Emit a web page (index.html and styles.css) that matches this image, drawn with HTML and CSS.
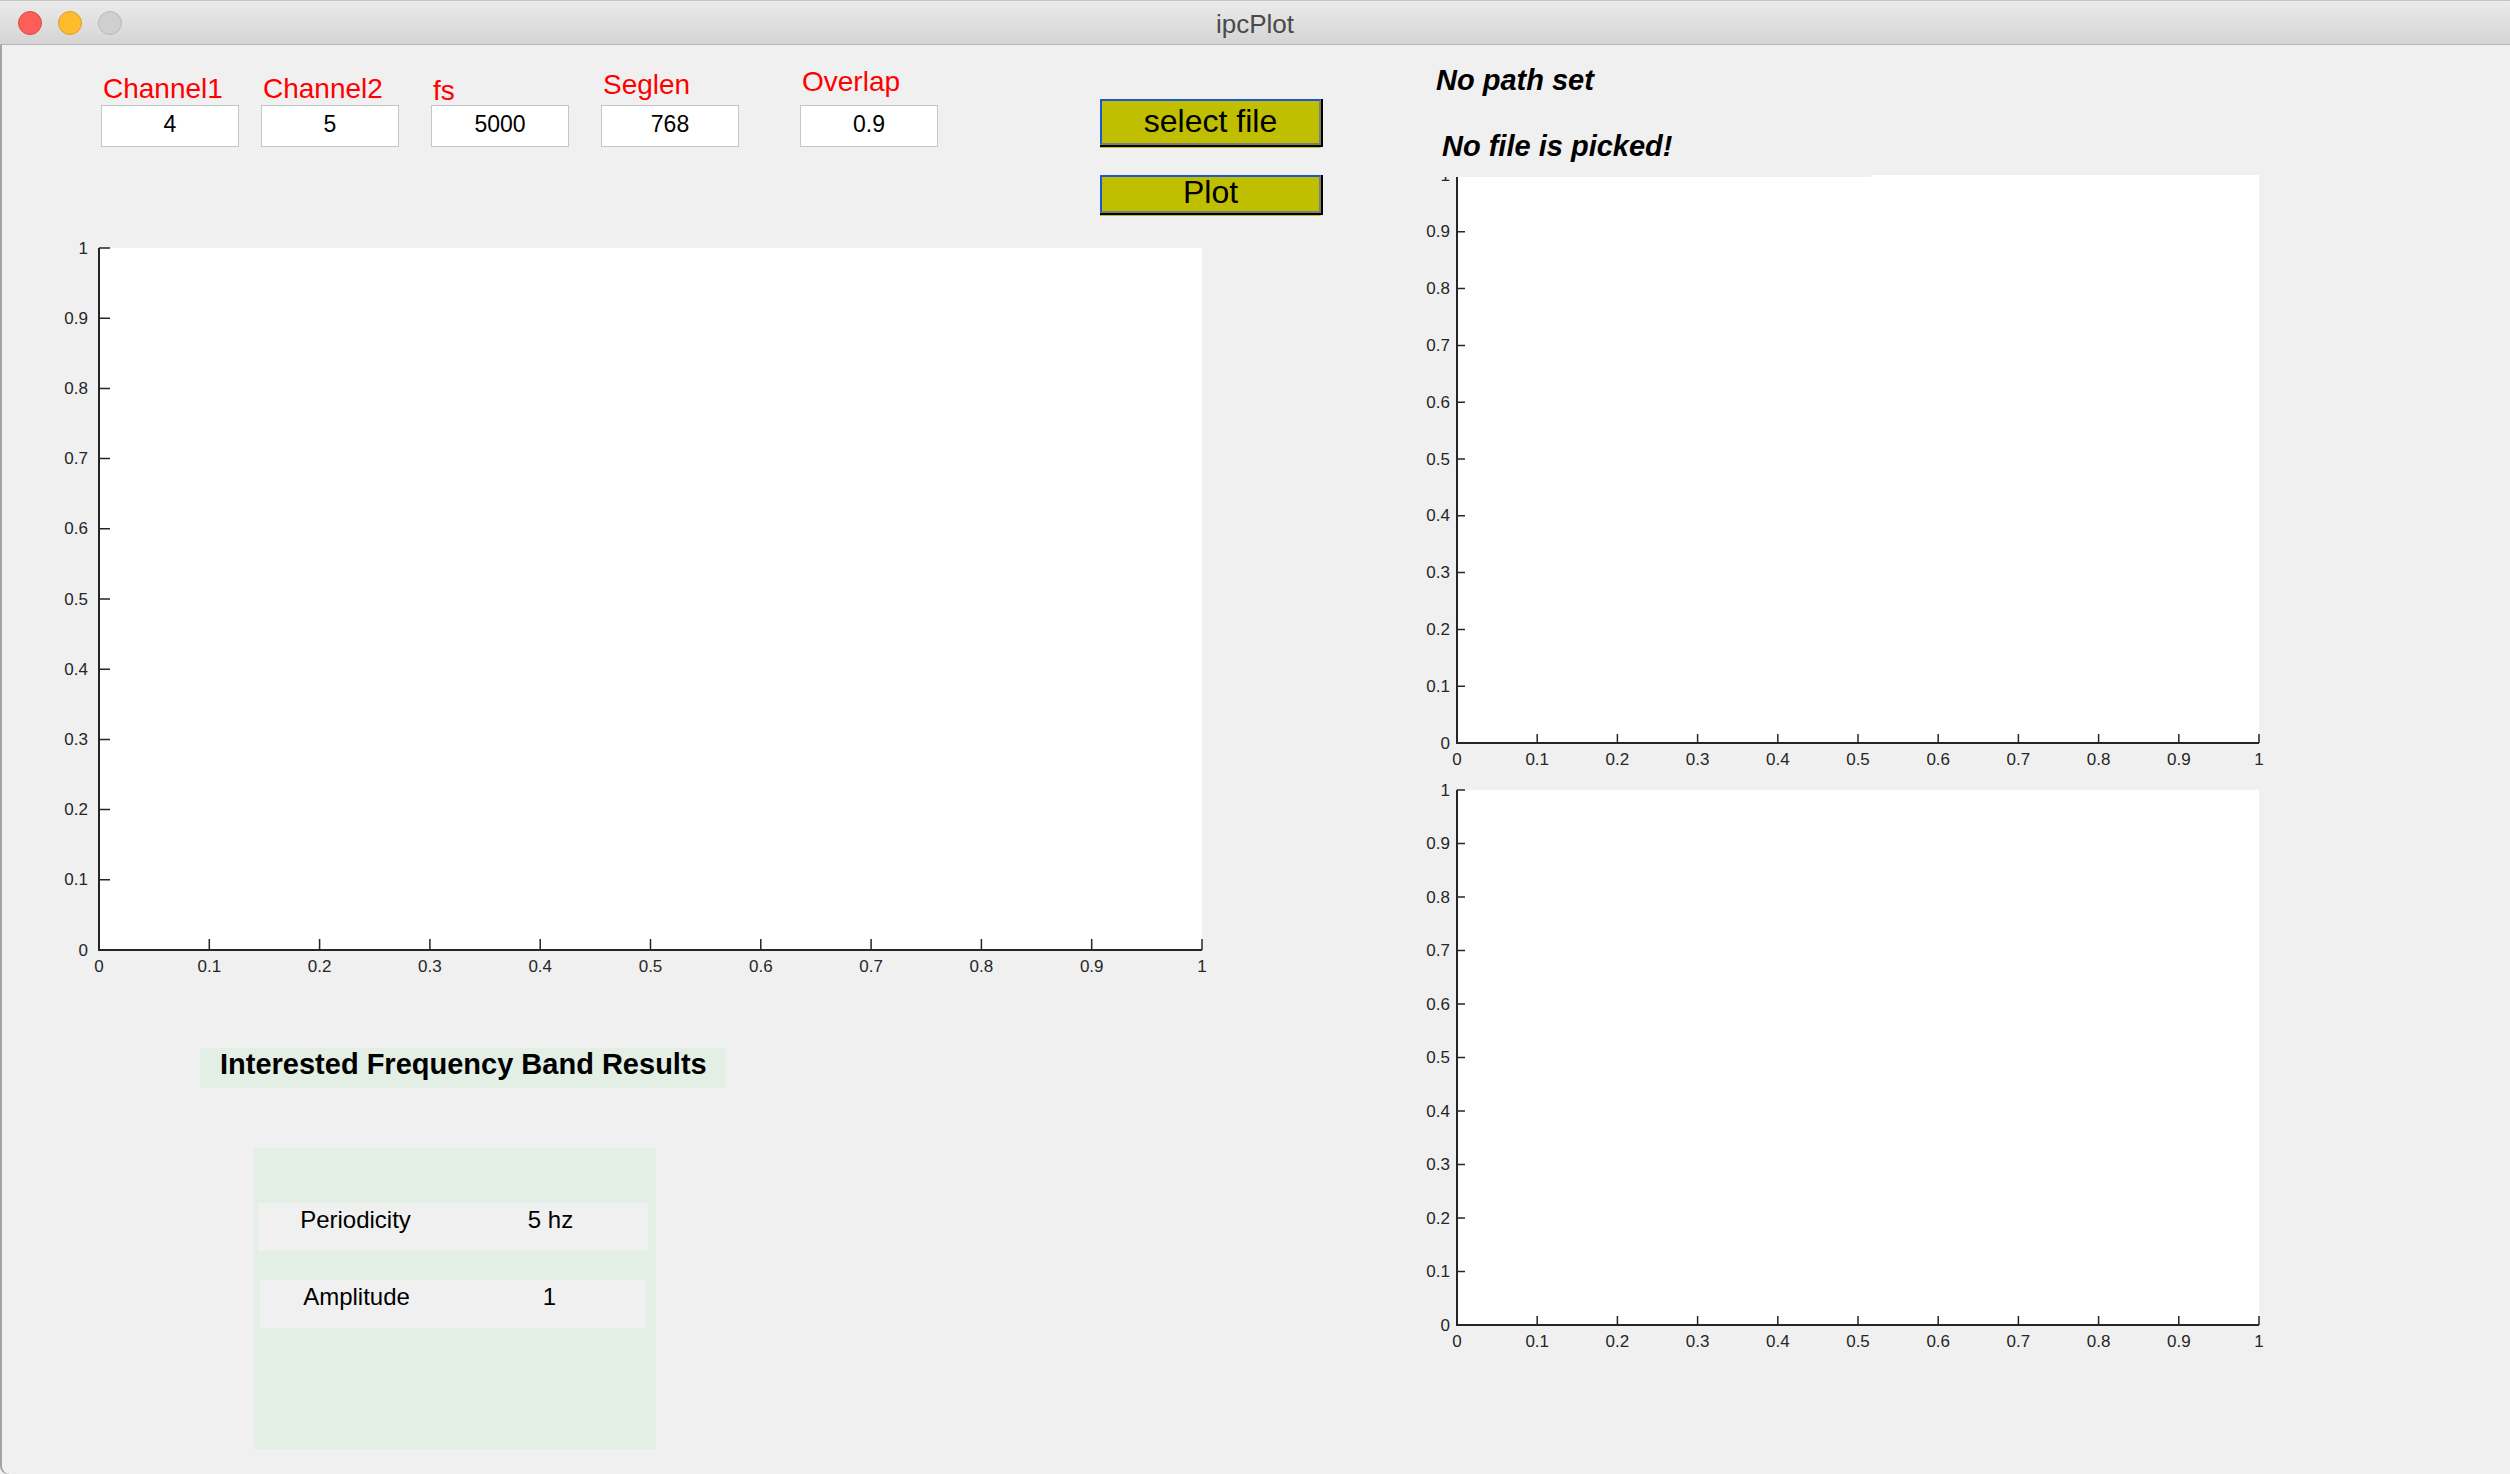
FILE: index.html
```html
<!DOCTYPE html>
<html>
<head>
<meta charset="utf-8">
<title>ipcPlot</title>
<link rel="stylesheet" href="styles.css">
</head>
<body>
<div class="window">
  <div class="titlebar">
    <div class="lights">
      <span class="light light-close"></span>
      <span class="light light-min"></span>
      <span class="light light-max"></span>
    </div>
    <div class="title">ipcPlot</div>
    <div></div>
  </div>
  <div class="content">
    <div class="left">
      <div class="params">
        <div class="field">
          <span class="label">Channel1</span>
          <div class="box">4</div>
        </div>
        <div class="field field-gap-sm">
          <span class="label">Channel2</span>
          <div class="box">5</div>
        </div>
        <div class="field field-gap-md">
          <span class="label label-low">fs</span>
          <div class="box">5000</div>
        </div>
        <div class="field field-gap-md">
          <span class="label label-high">Seglen</span>
          <div class="box">768</div>
        </div>
        <div class="field field-gap-lg">
          <span class="label label-higher">Overlap</span>
          <div class="box">0.9</div>
        </div>
        <div class="buttons">
          <div class="btn btn-select">select file</div>
          <div class="btn btn-plot">Plot</div>
        </div>
      </div>

      <svg class="axes axes-main" width="1230" height="760" viewBox="0 0 1230 760">
        <rect class="plot-bg" x="99" y="18" width="1103" height="702"/>
        <path class="axis" d="M99 18V720H1202"/>
        <path class="tick" d="M99 649.8h11M99 579.6h11M99 509.4h11M99 439.2h11M99 369h11M99 298.8h11M99 228.6h11M99 158.4h11M99 88.2h11M99 18h11"/>
        <path class="tick" d="M209.3 720v-11M319.6 720v-11M429.9 720v-11M540.2 720v-11M650.5 720v-11M760.8 720v-11M871.1 720v-11M981.4 720v-11M1091.7 720v-11M1202 720v-11"/>
        <g class="ylabels">
          <text x="88" y="720">0</text>
          <text x="88" y="649.8">0.1</text>
          <text x="88" y="579.6">0.2</text>
          <text x="88" y="509.4">0.3</text>
          <text x="88" y="439.2">0.4</text>
          <text x="88" y="369">0.5</text>
          <text x="88" y="298.8">0.6</text>
          <text x="88" y="228.6">0.7</text>
          <text x="88" y="158.4">0.8</text>
          <text x="88" y="88.2">0.9</text>
          <text x="88" y="18">1</text>
        </g>
        <g class="xlabels">
          <text x="99" y="736">0</text>
          <text x="209.3" y="736">0.1</text>
          <text x="319.6" y="736">0.2</text>
          <text x="429.9" y="736">0.3</text>
          <text x="540.2" y="736">0.4</text>
          <text x="650.5" y="736">0.5</text>
          <text x="760.8" y="736">0.6</text>
          <text x="871.1" y="736">0.7</text>
          <text x="981.4" y="736">0.8</text>
          <text x="1091.7" y="736">0.9</text>
          <text x="1202" y="736">1</text>
        </g>
      </svg>

      <div class="heading">Interested Frequency Band Results</div>

      <div class="results">
        <div class="row">
          <div class="cell">Periodicity</div>
          <div class="cell">5 hz</div>
        </div>
        <div class="row row-second">
          <div class="cell">Amplitude</div>
          <div class="cell">1</div>
        </div>
      </div>
    </div>

    <div class="right">
      <div class="status">No path set</div>
      <div class="status status-file">No file is picked!</div>

      <svg class="axes axes-top" width="1110" height="610" viewBox="0 -10 1110 610">
        <rect class="plot-bg" x="57" y="3" width="802" height="568"/>
        <path class="axis" d="M57 3V571H859"/>
        <path class="tick" d="M57 514.2h8M57 457.4h8M57 400.6h8M57 343.8h8M57 287h8M57 230.2h8M57 173.4h8M57 116.6h8M57 59.8h8M57 3h8"/>
        <path class="tick" d="M137.2 571v-9M217.4 571v-9M297.6 571v-9M377.8 571v-9M458 571v-9M538.2 571v-9M618.4 571v-9M698.6 571v-9M778.8 571v-9M859 571v-9"/>
        <g class="ylabels">
          <text x="50" y="571">0</text>
          <text x="50" y="514.2">0.1</text>
          <text x="50" y="457.4">0.2</text>
          <text x="50" y="400.6">0.3</text>
          <text x="50" y="343.8">0.4</text>
          <text x="50" y="287">0.5</text>
          <text x="50" y="230.2">0.6</text>
          <text x="50" y="173.4">0.7</text>
          <text x="50" y="116.6">0.8</text>
          <text x="50" y="59.8">0.9</text>
          <text x="50" y="3">1</text>
        </g>
        <g class="xlabels">
          <text x="57" y="587.5">0</text>
          <text x="137.2" y="587.5">0.1</text>
          <text x="217.4" y="587.5">0.2</text>
          <text x="297.6" y="587.5">0.3</text>
          <text x="377.8" y="587.5">0.4</text>
          <text x="458" y="587.5">0.5</text>
          <text x="538.2" y="587.5">0.6</text>
          <text x="618.4" y="587.5">0.7</text>
          <text x="698.6" y="587.5">0.8</text>
          <text x="778.8" y="587.5">0.9</text>
          <text x="859" y="587.5">1</text>
        </g>
      </svg>

      <svg class="axes axes-bottom" width="1110" height="600" viewBox="0 0 1110 600">
        <rect class="plot-bg" x="57" y="18" width="802" height="535"/>
        <path class="axis" d="M57 18V553H859"/>
        <path class="tick" d="M57 499.5h8M57 446h8M57 392.5h8M57 339h8M57 285.5h8M57 232h8M57 178.5h8M57 125h8M57 71.5h8M57 18h8"/>
        <path class="tick" d="M137.2 553v-9M217.4 553v-9M297.6 553v-9M377.8 553v-9M458 553v-9M538.2 553v-9M618.4 553v-9M698.6 553v-9M778.8 553v-9M859 553v-9"/>
        <g class="ylabels">
          <text x="50" y="553">0</text>
          <text x="50" y="499.5">0.1</text>
          <text x="50" y="446">0.2</text>
          <text x="50" y="392.5">0.3</text>
          <text x="50" y="339">0.4</text>
          <text x="50" y="285.5">0.5</text>
          <text x="50" y="232">0.6</text>
          <text x="50" y="178.5">0.7</text>
          <text x="50" y="125">0.8</text>
          <text x="50" y="71.5">0.9</text>
          <text x="50" y="18">1</text>
        </g>
        <g class="xlabels">
          <text x="57" y="569.5">0</text>
          <text x="137.2" y="569.5">0.1</text>
          <text x="217.4" y="569.5">0.2</text>
          <text x="297.6" y="569.5">0.3</text>
          <text x="377.8" y="569.5">0.4</text>
          <text x="458" y="569.5">0.5</text>
          <text x="538.2" y="569.5">0.6</text>
          <text x="618.4" y="569.5">0.7</text>
          <text x="698.6" y="569.5">0.8</text>
          <text x="778.8" y="569.5">0.9</text>
          <text x="859" y="569.5">1</text>
        </g>
      </svg>
    </div>
  </div>
</div>
</body>
</html>
```

FILE: styles.css
```css
* {
  box-sizing: border-box;
}

body {
  margin: 0;
  background: #f0f0f0;
  font-family: "Liberation Sans", Arial, sans-serif;
}

.window {
  width: 2510px;
  height: 1474px;
  background: #f0f0f0;
  overflow: hidden;
  box-shadow: inset 2px 0 0 #a4a4a4;
  border-bottom-left-radius: 8px;
}

/* ---------- title bar ---------- */
.titlebar {
  height: 45px;
  border-top: 1px solid #c6c6c6;
  border-bottom: 1px solid #b4b4b4;
  background: linear-gradient(#ebebeb, #d4d4d4);
  display: grid;
  grid-template-columns: 1fr auto 1fr;
  align-items: center;
}

.lights {
  display: flex;
  gap: 16px;
  padding-left: 18px;
}

.light {
  width: 24px;
  height: 24px;
  border-radius: 50%;
}

.light-close {
  background: #fc5f57;
  border: 1px solid #df4744;
}

.light-min {
  background: #fdbc2e;
  border: 1px solid #de9f25;
}

.light-max {
  background: #cfcfcf;
  border: 1px solid #b9b9b9;
}

.title {
  font-size: 26px;
  color: #4a4a4a;
  padding-top: 3px;
}

/* ---------- content ---------- */
.content {
  display: grid;
  grid-template-columns: 1400px 1110px;
}

.left {
  padding-top: 15px;
}

.params {
  display: flex;
  align-items: flex-start;
  padding-left: 101px;
}

.field {
  display: flex;
  flex-direction: column;
  justify-content: flex-end;
  width: 138px;
  height: 87px;
}

.field-gap-sm {
  margin-left: 22px;
}

.field-gap-md {
  margin-left: 32px;
}

.field-gap-lg {
  margin-left: 61px;
}

.label {
  color: #ff0000;
  font-size: 28px;
  line-height: 30px;
  padding-left: 2px;
  margin-bottom: 1px;
  white-space: nowrap;
}

.label-low {
  margin-bottom: -1px;
}

.label-high {
  margin-bottom: 5px;
}

.label-higher {
  margin-bottom: 8px;
}

.box {
  height: 42px;
  border: 1px solid #c6c6c6;
  background: #ffffff;
  font-size: 23px;
  line-height: 36px;
  padding-bottom: 4px;
  text-align: center;
  color: #000;
}

.buttons {
  margin-left: 162px;
  margin-top: 39px;
  display: flex;
  flex-direction: column;
}

.btn {
  width: 221px;
  background: #bfbf00;
  border-style: solid;
  border-width: 2px;
  border-color: #1a58d8 #7d7d7d #7d7d7d #1a58d8;
  box-shadow: 2px 0 0 #000, 0 2px 0 #000, 2px 2px 0 #000, 0 3px 0 #c4c400;
  font-size: 32px;
  text-align: center;
  color: #000;
}

.btn-select {
  height: 46px;
  line-height: 40px;
}

.btn-plot {
  height: 38px;
  line-height: 31px;
  margin-top: 30px;
}

/* ---------- axes ---------- */
.axes {
  display: block;
}

.axes-main {
  margin-top: 17px;
}

/* the status text component lies over the top few pixels of this axes */
.axes-top {
  margin-top: -15px;
}

.plot-bg {
  fill: #ffffff;
}

.axis {
  fill: none;
  stroke: #262626;
  stroke-width: 2;
}

.tick {
  fill: none;
  stroke: #262626;
  stroke-width: 1.5;
}

.axes text {
  font-family: "Liberation Sans", Arial, sans-serif;
  font-size: 17px;
  fill: #262626;
  dominant-baseline: central;
}

.ylabels text {
  text-anchor: end;
}

.xlabels text {
  text-anchor: middle;
}

/* ---------- results ---------- */
.heading {
  margin-top: 58px;
  margin-left: 200px;
  width: 526px;
  height: 40px;
  background: #e3eee5;
  padding-left: 20px;
  font-size: 29px;
  font-weight: bold;
  line-height: 33px;
  color: #000;
  white-space: nowrap;
}

.results {
  margin-top: 60px;
  margin-left: 254px;
  width: 402px;
  height: 301px;
  background: #e3eee5;
  padding: 55px 0 0 4px;
}

.row {
  width: 390px;
  height: 48px;
  background: #f0f0f0;
  display: grid;
  grid-template-columns: 1fr 1fr;
}

.row-second {
  margin-top: 29px;
  margin-left: 2px;
  width: 386px;
}

.cell {
  font-size: 24px;
  line-height: 30px;
  padding-top: 2px;
  text-align: center;
  color: #000;
}

/* ---------- right column ---------- */
.right {
  padding-top: 19px;
}

.status {
  font-size: 29px;
  font-weight: bold;
  font-style: italic;
  line-height: 32px;
  padding-left: 36px;
  color: #000;
}

.status-file {
  position: relative;
  z-index: 1;
  width: 471px;
  margin-top: 34px;
  padding-left: 42px;
  padding-bottom: 15px;
  background: #f0f0f0;
}
```
